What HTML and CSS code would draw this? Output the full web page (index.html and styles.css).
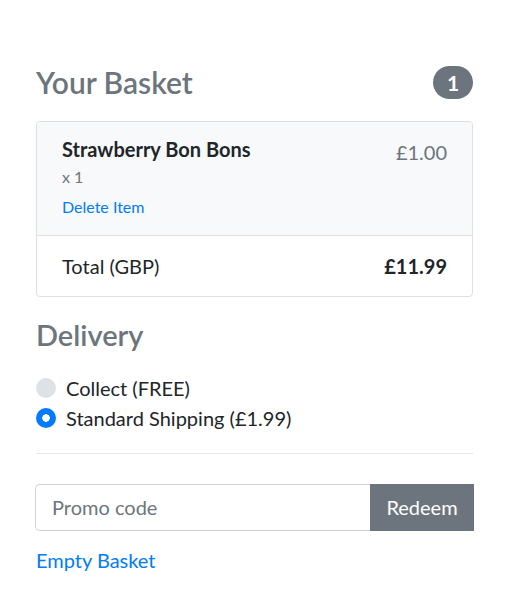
FILE: index.html
```html
<!DOCTYPE html>
<html lang="en">
<head>
<meta charset="utf-8">
<title>Your Basket</title>
<link rel="stylesheet" href="styles.css">
</head>
<body>
<main class="basket">
  <h2 class="heading-row">
    <span class="muted">Your Basket</span>
    <span class="badge">1</span>
  </h2>
  <ul class="card">
    <li class="item item-light">
      <div class="item-info">
        <h6 class="item-name">Strawberry Bon Bons</h6>
        <div class="item-qty">x 1</div>
        <a class="item-delete" href="#">Delete Item</a>
      </div>
      <span class="item-price">£1.00</span>
    </li>
    <li class="item">
      <span>Total (GBP)</span>
      <strong>£11.99</strong>
    </li>
  </ul>

  <h2 class="section-title muted">Delivery</h2>
  <div class="radios">
    <label class="radio"><span class="radio-dot"></span>Collect (FREE)</label>
    <label class="radio"><span class="radio-dot checked"></span>Standard Shipping (£1.99)</label>
  </div>
  <hr class="divider">
  <div class="promo">
    <input class="promo-input" type="text" placeholder="Promo code">
    <button class="promo-btn" type="button">Redeem</button>
  </div>
  <a class="empty-link" href="#">Empty Basket</a>
</main>
</body>
</html>
```

FILE: styles.css
```css
* { box-sizing: border-box; }
html, body { margin: 0; padding: 0; background: #fff; }
body {
  font-family: "Lato", "Open Sans", sans-serif;
  color: #212529;
  font-size: 20px;
  line-height: 1.5;
}
.basket {
  width: 437px;
  margin-left: 36px;
  padding-top: 64px;
}
.muted { color: #6c757d; }
.heading-row {
  display: flex;
  justify-content: space-between;
  align-items: center;
  margin: 0 0 21px 0;
  font-size: 30px;
  font-weight: 600;
  line-height: 1.2;
}
.badge {
  display: inline-flex;
  align-items: center;
  justify-content: center;
  width: 40px;
  height: 33px;
  border-radius: 17px;
  background: #6c757d;
  color: #fff;
  font-size: 21px;
  font-weight: 700;
  line-height: 1;
}
.card {
  list-style: none;
  margin: 0;
  padding: 0;
  border: 1px solid #dfdfdf;
  border-radius: 4px;
  overflow: hidden;
}
.item {
  display: flex;
  justify-content: space-between;
  padding: 15px 25px 15px 25px;
}
.item + .item { border-top: 1px solid #dfdfdf; }
.item-light { background: #f8f9fa; padding-bottom: 16px; }
.item-name {
  margin: 0;
  font-size: 20px;
  font-weight: 700;
  line-height: 1.2;
}
.item-qty {
  margin-top: 4px;
  font-size: 16px;
  color: #6c757d;
}
.item-delete {
  display: block;
  margin-top: 6px;
  font-size: 16px;
  color: #007bff;
  text-decoration: none;
}
.item-price { color: #6c757d; }
.section-title {
  margin: 21px 0 20px 0;
  font-size: 29px;
  font-weight: 600;
  line-height: 1.2;
}
.radios { display: flex; flex-direction: column; }
.radio {
  display: flex;
  align-items: center;
  line-height: 30px;
}
.radio-dot {
  width: 20px;
  height: 20px;
  border-radius: 50%;
  background: #dee2e6;
  margin-right: 10px;
  flex: none;
}
.radio-dot.checked {
  background: radial-gradient(circle, #fff 0 3.5px, #007bff 4px);
}
.divider {
  margin: 20px 0 30px 0;
  border: 0;
  border-top: 1px solid #e6e6e6;
}
.promo {
  display: flex;
  width: 439px;
  margin-left: -1px;
  height: 47px;
}
.promo-input {
  flex: 1;
  min-width: 0;
  border: 1px solid #ced4da;
  border-right: 0;
  border-radius: 5px 0 0 5px;
  padding: 0 16px;
  font-family: inherit;
  font-size: 20px;
  color: #495057;
  outline: none;
}
.promo-input::placeholder { color: #6c757d; opacity: 1; }
.promo-btn {
  width: 104px;
  border: 0;
  background: #6c757d;
  color: #fff;
  font-family: inherit;
  font-size: 20px;
  padding: 0;
}
.empty-link {
  display: inline-block;
  margin-top: 14px;
  color: #007bff;
  text-decoration: none;
}
```
